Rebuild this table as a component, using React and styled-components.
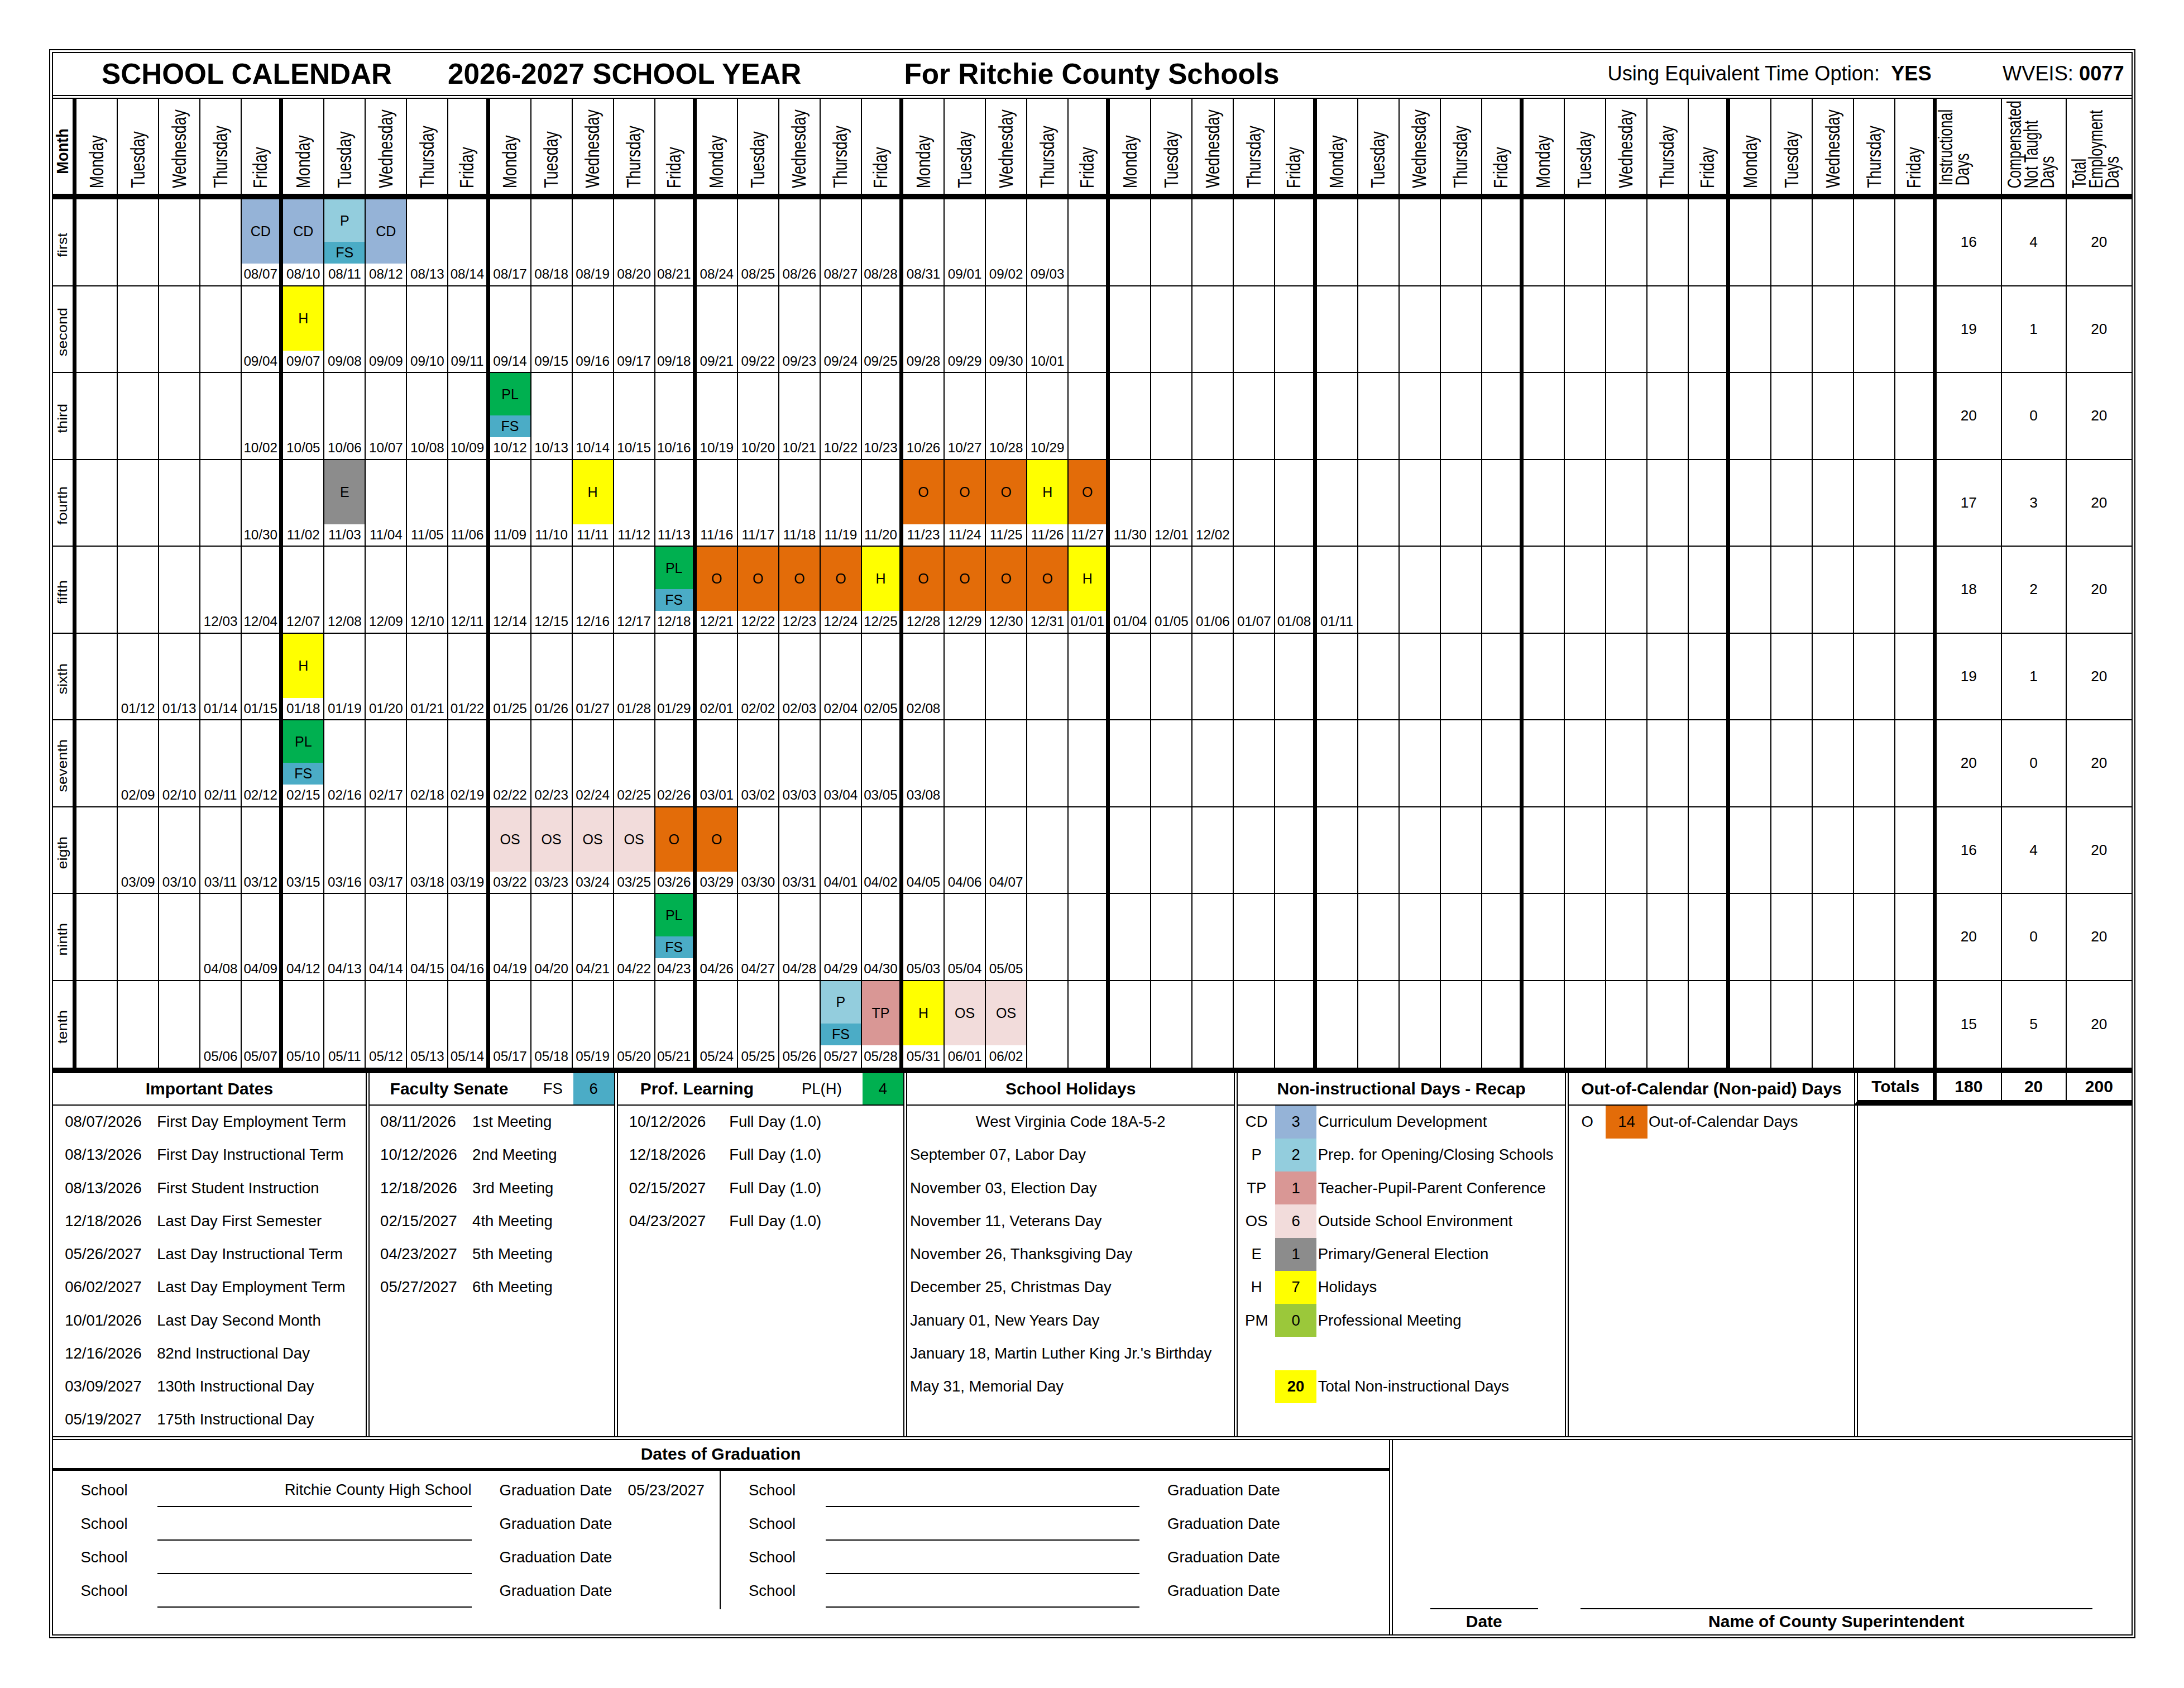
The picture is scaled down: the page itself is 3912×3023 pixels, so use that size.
import React from 'react';
import styled, { createGlobalStyle } from 'styled-components';

const GlobalStyle = createGlobalStyle`
  html, body { margin: 0; padding: 0; background: #fff; }
  body { font-family: "Liberation Sans", Arial, Helvetica, sans-serif; color: #000; }
  * { box-sizing: border-box; }
`;

// month col + 45 day cols + 3 totals cols, shared by calendar and bottom sections
const COLS = '17px repeat(45, minmax(0, 1fr)) repeat(3, 46.5px)';

const COLORS = {
  CD: '#95b3d7',
  P: '#93cddd',
  FS: '#4bacc6',
  H: '#ffff00',
  PL: '#00b050',
  E: '#8c8c8c',
  O: '#e36c09',
  OS: '#f2dcdb',
  TP: '#d99795',
  PM: '#9bc83a',
};

const DAYS = ['Monday', 'Tuesday', 'Wednesday', 'Thursday', 'Friday'];

const MONTHS = [
  { name: 'first', start: 4, dates: '08/07 08/10 08/11 08/12 08/13 08/14 08/17 08/18 08/19 08/20 08/21 08/24 08/25 08/26 08/27 08/28 08/31 09/01 09/02 09/03', marks: { 4: 'CD', 5: 'CD', 6: 'P/FS', 7: 'CD' }, totals: [16, 4, 20] },
  { name: 'second', start: 4, dates: '09/04 09/07 09/08 09/09 09/10 09/11 09/14 09/15 09/16 09/17 09/18 09/21 09/22 09/23 09/24 09/25 09/28 09/29 09/30 10/01', marks: { 5: 'H' }, totals: [19, 1, 20] },
  { name: 'third', start: 4, dates: '10/02 10/05 10/06 10/07 10/08 10/09 10/12 10/13 10/14 10/15 10/16 10/19 10/20 10/21 10/22 10/23 10/26 10/27 10/28 10/29', marks: { 10: 'PL/FS' }, totals: [20, 0, 20] },
  { name: 'fourth', start: 4, dates: '10/30 11/02 11/03 11/04 11/05 11/06 11/09 11/10 11/11 11/12 11/13 11/16 11/17 11/18 11/19 11/20 11/23 11/24 11/25 11/26 11/27 11/30 12/01 12/02', marks: { 6: 'E', 12: 'H', 20: 'O', 21: 'O', 22: 'O', 23: 'H', 24: 'O' }, totals: [17, 3, 20] },
  { name: 'fifth', start: 3, dates: '12/03 12/04 12/07 12/08 12/09 12/10 12/11 12/14 12/15 12/16 12/17 12/18 12/21 12/22 12/23 12/24 12/25 12/28 12/29 12/30 12/31 01/01 01/04 01/05 01/06 01/07 01/08 01/11', marks: { 14: 'PL/FS', 15: 'O', 16: 'O', 17: 'O', 18: 'O', 19: 'H', 20: 'O', 21: 'O', 22: 'O', 23: 'O', 24: 'H' }, totals: [18, 2, 20] },
  { name: 'sixth', start: 1, dates: '01/12 01/13 01/14 01/15 01/18 01/19 01/20 01/21 01/22 01/25 01/26 01/27 01/28 01/29 02/01 02/02 02/03 02/04 02/05 02/08', marks: { 5: 'H' }, totals: [19, 1, 20] },
  { name: 'seventh', start: 1, dates: '02/09 02/10 02/11 02/12 02/15 02/16 02/17 02/18 02/19 02/22 02/23 02/24 02/25 02/26 03/01 03/02 03/03 03/04 03/05 03/08', marks: { 5: 'PL/FS' }, totals: [20, 0, 20] },
  { name: 'eigth', start: 1, dates: '03/09 03/10 03/11 03/12 03/15 03/16 03/17 03/18 03/19 03/22 03/23 03/24 03/25 03/26 03/29 03/30 03/31 04/01 04/02 04/05 04/06 04/07', marks: { 10: 'OS', 11: 'OS', 12: 'OS', 13: 'OS', 14: 'O', 15: 'O' }, totals: [16, 4, 20] },
  { name: 'ninth', start: 3, dates: '04/08 04/09 04/12 04/13 04/14 04/15 04/16 04/19 04/20 04/21 04/22 04/23 04/26 04/27 04/28 04/29 04/30 05/03 05/04 05/05', marks: { 14: 'PL/FS' }, totals: [20, 0, 20] },
  { name: 'tenth', start: 3, dates: '05/06 05/07 05/10 05/11 05/12 05/13 05/14 05/17 05/18 05/19 05/20 05/21 05/24 05/25 05/26 05/27 05/28 05/31 06/01 06/02', marks: { 18: 'P/FS', 19: 'TP', 20: 'H', 21: 'OS', 22: 'OS' }, totals: [15, 5, 20] },
];

const IMPORTANT = [
  ['08/07/2026', 'First Day Employment Term'],
  ['08/13/2026', 'First Day Instructional Term'],
  ['08/13/2026', 'First Student Instruction'],
  ['12/18/2026', 'Last Day First Semester'],
  ['05/26/2027', 'Last Day Instructional Term'],
  ['06/02/2027', 'Last Day Employment Term'],
  ['10/01/2026', 'Last Day Second Month'],
  ['12/16/2026', '82nd Instructional Day'],
  ['03/09/2027', '130th Instructional Day'],
  ['05/19/2027', '175th Instructional Day'],
];

const SENATE = [
  ['08/11/2026', '1st Meeting'],
  ['10/12/2026', '2nd Meeting'],
  ['12/18/2026', '3rd Meeting'],
  ['02/15/2027', '4th Meeting'],
  ['04/23/2027', '5th Meeting'],
  ['05/27/2027', '6th Meeting'],
];

const LEARNING = ['10/12/2026', '12/18/2026', '02/15/2027', '04/23/2027'];

const HOLIDAYS = [
  'September 07, Labor Day',
  'November 03, Election Day',
  'November 11, Veterans Day',
  'November 26, Thanksgiving Day',
  'December 25, Christmas Day',
  'January 01, New Years Day',
  "January 18, Martin Luther King Jr.'s Birthday",
  'May 31, Memorial Day',
];

const RECAP = [
  ['CD', '3', 'Curriculum Development'],
  ['P', '2', 'Prep. for Opening/Closing Schools'],
  ['TP', '1', 'Teacher-Pupil-Parent Conference'],
  ['OS', '6', 'Outside School Environment'],
  ['E', '1', 'Primary/General Election'],
  ['H', '7', 'Holidays'],
  ['PM', '0', 'Professional Meeting'],
];

const GRAD_LEFT = [
  ['Ritchie County High School', '05/23/2027'],
  ['', ''],
  ['', ''],
  ['', ''],
];

/* ---------- page frame ---------- */

const Page = styled.div`
  zoom: 2.5;
  width: 1564px;
  min-height: 1209px;
  padding: 35px 0 0 35px;
`;

const Frame = styled.div`
  width: 1495px;
  border: 3px double #000;
  display: flex;
  flex-direction: column;
`;

const TitleBar = styled.div`
  height: 33px;
  border-bottom: 3px double #000;
  padding-left: 35px;
  display: grid;
  grid-template-columns: 248px 327px 504px 283px 1fr;
  align-items: center;
  white-space: nowrap;
`;

const Title = styled.span`
  font-size: 20.5px;
  font-weight: 700;
`;

const Info = styled.span`
  font-size: 14.5px;
`;

const Strong = styled.b`
  margin-left: ${p => p.$ml || 0}px;
`;

/* ---------- calendar grid ---------- */

const CalGrid = styled.div`
  display: grid;
  grid-template-columns: ${COLS};
  grid-template-rows: 72px repeat(10, 62.2px);
`;

const Rot = styled.span`
  display: block;
  writing-mode: vertical-rl;
  transform: rotate(180deg) scaleX(${p => p.$sx ?? 1});
  font-size: ${p => p.$fs}px;
  font-weight: ${p => (p.$bold ? 700 : 400)};
  line-height: ${p => p.$lh || 'normal'};
  white-space: nowrap;
`;

const HeadCell = styled.div`
  display: flex;
  align-items: flex-end;
  justify-content: ${p => (p.$pl != null ? 'flex-start' : 'center')};
  padding: 0 0 ${p => p.$pb ?? 4}px ${p => p.$pl ?? 0}px;
  border-right: ${p => p.$rb}px solid #000;
  border-bottom: 4px solid #000;
  min-width: 0;
`;

const RowCell = styled.div`
  min-width: 0;
  border-right: ${p => p.$rb}px solid #000;
  border-bottom: ${p => (p.$last ? 0 : 1)}px solid #000;
`;

const MonthCell = styled(RowCell)`
  display: flex;
  align-items: center;
  justify-content: center;
  padding-top: 4px;
`;

const DayCell = styled(RowCell)`
  display: flex;
  flex-direction: column;
`;

const MarkArea = styled.div`
  height: 46px;
  display: flex;
  flex-direction: column;
`;

const Mark = styled.div`
  height: ${p => p.$h}px;
  background: ${p => p.$bg};
  display: flex;
  align-items: center;
  justify-content: center;
  font-size: 10px;
`;

const DateText = styled.div`
  flex: 1;
  display: flex;
  align-items: center;
  justify-content: center;
  font-size: 9.7px;
  white-space: nowrap;
`;

const NumCell = styled(RowCell)`
  display: flex;
  align-items: center;
  justify-content: center;
  font-size: 10.5px;
`;

/* ---------- bottom sections ---------- */

const Bottom = styled.div`
  display: grid;
  grid-template-columns: ${COLS};
  grid-template-rows: 23px 237px;
  border-top: 4px solid #000;
`;

const Section = styled.div`
  grid-column: ${p => p.$col};
  grid-row: 1 / 3;
  border-left: ${p => (p.$first ? 'none' : '3px double #000')};
  display: flex;
  flex-direction: column;
  min-width: 0;
`;

const SecHead = styled.div`
  height: 23px;
  flex: none;
  border-bottom: 1px solid #000;
  font-size: 12px;
  font-weight: 700;
  white-space: nowrap;
  display: ${p => (p.$grid ? 'grid' : 'flex')};
  grid-template-columns: ${p => p.$grid || 'none'};
  align-items: center;
  justify-content: ${p => (p.$grid ? 'stretch' : 'center')};
`;

const HeadTitle = styled.span`
  padding-left: ${p => p.$pl}px;
`;

const HeadCode = styled.span`
  font-weight: 400;
  font-size: 11px;
  text-align: center;
`;

const HeadCount = styled.span`
  align-self: stretch;
  display: flex;
  align-items: center;
  justify-content: center;
  font-weight: 400;
  font-size: 11px;
  background: ${p => p.$bg};
`;

const SecBody = styled.div`
  flex: 1;
  display: flex;
  flex-direction: column;
`;

const ListRow = styled.div`
  height: 23.7px;
  flex: none;
  display: grid;
  grid-template-columns: ${p => p.$dw}px 1fr;
  align-items: center;
  padding-left: ${p => p.$pl}px;
  font-size: 11px;
  white-space: nowrap;
`;

const TextRow = styled.div`
  height: 23.7px;
  flex: none;
  display: flex;
  align-items: center;
  justify-content: ${p => (p.$center ? 'center' : 'flex-start')};
  padding-left: ${p => (p.$center ? 0 : 2)}px;
  font-size: 11px;
  white-space: nowrap;
`;

const KeyRow = styled.div`
  height: 23.7px;
  flex: none;
  display: grid;
  grid-template-columns: ${p => p.$cols};
  align-items: stretch;
  font-size: 11px;
  white-space: nowrap;
`;

const KeyCode = styled.span`
  display: flex;
  align-items: center;
  justify-content: center;
`;

const KeyCount = styled.span`
  display: flex;
  align-items: center;
  justify-content: center;
  background: ${p => p.$bg || 'transparent'};
  font-weight: ${p => (p.$bold ? 700 : 400)};
`;

const KeyText = styled.span`
  display: flex;
  align-items: center;
  padding-left: 1px;
`;

const TotalsHead = styled.div`
  grid-column: ${p => p.$col};
  grid-row: 1;
  border-left: ${p => (p.$dl ? '3px double #000' : 'none')};
  border-right: ${p => p.$rb}px solid #000;
  border-bottom: 4px solid #000;
  display: flex;
  align-items: center;
  justify-content: center;
  font-size: 12px;
  font-weight: 700;
`;

const TotalsBody = styled.div`
  grid-column: 45 / 50;
  grid-row: 2;
  border-left: 3px double #000;
`;

/* ---------- graduation + signature ---------- */

const Grad = styled.div`
  display: flex;
  height: 142px;
  border-top: 3px double #000;
`;

const GradLeft = styled.div`
  width: 960px;
  border-right: 3px double #000;
  display: flex;
  flex-direction: column;
`;

const GradHead = styled.div`
  height: 22px;
  border-bottom: 2px solid #000;
  display: flex;
  align-items: center;
  justify-content: center;
  font-size: 12px;
  font-weight: 700;
`;

const GradBody = styled.div`
  display: flex;
  align-items: flex-start;
`;

const GradHalf = styled.div`
  width: 50%;
  height: 99px;
  padding-top: 2px;
  border-right: ${p => (p.$divider ? '1px solid #000' : 'none')};
`;

const GradLine = styled.div`
  height: 24px;
  display: grid;
  grid-template-columns: 55px 225px 20px 92px 1fr;
  align-items: center;
  padding-left: 20px;
  font-size: 11px;
  white-space: nowrap;
`;

const Field = styled.span`
  align-self: stretch;
  display: flex;
  align-items: center;
  justify-content: flex-end;
  border-bottom: 1px solid #000;
`;

const GradRight = styled.div`
  flex: 1;
  display: flex;
  flex-direction: column;
  justify-content: flex-end;
  padding: 0 28px 0 27px;
`;

const SignRow = styled.div`
  display: flex;
  justify-content: space-between;
`;

const Sign = styled.div`
  width: ${p => p.$w}px;
  height: 19px;
  border-top: 1px solid #000;
  display: flex;
  align-items: center;
  justify-content: center;
  font-size: 12px;
  font-weight: 700;
`;

const weekBorder = d => (d % 5 === 4 ? 3 : 1);

const MonthRow = ({ m, last }) => {
  const dates = m.dates.split(' ');
  return (
    <>
      <MonthCell $rb={3} $last={last}>
        <Rot $fs={10.8} $sx={0.9}>{m.name}</Rot>
      </MonthCell>
      {Array.from({ length: 45 }).map((_, d) => {
        const idx = d - m.start;
        const date = idx >= 0 && idx < dates.length ? dates[idx] : '';
        const codes = m.marks[d] ? m.marks[d].split('/') : [];
        return (
          <DayCell key={d} $rb={weekBorder(d)} $last={last}>
            <MarkArea>
              {codes.map((c, k) => (
                <Mark key={c} $bg={COLORS[c]} $h={codes.length > 1 ? (k === 0 ? 30.5 : 15.5) : 46}>
                  {c}
                </Mark>
              ))}
            </MarkArea>
            <DateText>{date}</DateText>
          </DayCell>
        );
      })}
      {m.totals.map((t, r) => (
        <NumCell key={r} $rb={r < 2 ? 1 : 0} $last={last}>{t}</NumCell>
      ))}
    </>
  );
};

const GradColumn = ({ rows, divider }) => (
  <GradHalf $divider={divider}>
    {rows.map(([school, date], i) => (
      <GradLine key={i}>
        <span>School</span>
        <Field>{school}</Field>
        <span />
        <span>Graduation Date</span>
        <span>{date}</span>
      </GradLine>
    ))}
  </GradHalf>
);

export default function App() {
  return (
    <>
      <GlobalStyle />
      <Page>
        <Frame>
          <TitleBar>
            <Title>SCHOOL CALENDAR</Title>
            <Title>2026-2027 SCHOOL YEAR</Title>
            <Title>For Ritchie County Schools</Title>
            <Info>Using Equivalent Time Option: <Strong $ml={4}>YES</Strong></Info>
            <Info>WVEIS: <Strong>0077</Strong></Info>
          </TitleBar>

          <CalGrid>
            <HeadCell $rb={3} $pb={14}>
              <Rot $fs={10.9} $bold $sx={1.06}>Month</Rot>
            </HeadCell>
            {Array.from({ length: 45 }).map((_, d) => (
              <HeadCell key={d} $rb={weekBorder(d)}>
                <Rot $fs={10.7} $sx={1.3}>{DAYS[d % 5]}</Rot>
              </HeadCell>
            ))}
            <HeadCell $rb={1} $pl={4} $pb={6}>
              <Rot $fs={10.1} $sx={1.38} $lh="8.6px">Instructional<br />Days</Rot>
            </HeadCell>
            <HeadCell $rb={1} $pl={8} $pb={4}>
              <Rot $fs={10.1} $sx={1.38} $lh="8.6px">Compensated<br />Not Taught<br />Days</Rot>
            </HeadCell>
            <HeadCell $rb={0} $pl={8} $pb={4}>
              <Rot $fs={10.1} $sx={1.38} $lh="8.6px">Total<br />Employment<br />Days</Rot>
            </HeadCell>
            {MONTHS.map((m, i) => (
              <MonthRow key={m.name} m={m} last={i === MONTHS.length - 1} />
            ))}
          </CalGrid>

          <Bottom>
            <Section $col="1 / 9" $first>
              <SecHead>Important Dates</SecHead>
              <SecBody>
                {IMPORTANT.map(([d, t]) => (
                  <ListRow key={d + t} $pl={8.7} $dw={66}>
                    <span>{d}</span>
                    <span>{t}</span>
                  </ListRow>
                ))}
              </SecBody>
            </Section>

            <Section $col="9 / 15">
              <SecHead $grid="4fr 1fr 1fr">
                <HeadTitle $pl={14.5}>Faculty Senate</HeadTitle>
                <HeadCode>FS</HeadCode>
                <HeadCount $bg={COLORS.FS}>6</HeadCount>
              </SecHead>
              <SecBody>
                {SENATE.map(([d, t]) => (
                  <ListRow key={d} $pl={7.5} $dw={66}>
                    <span>{d}</span>
                    <span>{t}</span>
                  </ListRow>
                ))}
              </SecBody>
            </Section>

            <Section $col="15 / 22">
              <SecHead $grid="4fr 2fr 1fr">
                <HeadTitle $pl={16}>Prof. Learning</HeadTitle>
                <HeadCode>PL(H)</HeadCode>
                <HeadCount $bg={COLORS.PL}>4</HeadCount>
              </SecHead>
              <SecBody>
                {LEARNING.map(d => (
                  <ListRow key={d} $pl={8} $dw={71.8}>
                    <span>{d}</span>
                    <span>Full Day (1.0)</span>
                  </ListRow>
                ))}
              </SecBody>
            </Section>

            <Section $col="22 / 30">
              <SecHead>School Holidays</SecHead>
              <SecBody>
                <TextRow $center>West Virginia Code 18A-5-2</TextRow>
                {HOLIDAYS.map(h => (
                  <TextRow key={h}>{h}</TextRow>
                ))}
              </SecBody>
            </Section>

            <Section $col="30 / 38">
              <SecHead>Non-instructional Days - Recap</SecHead>
              <SecBody>
                {RECAP.map(([c, n, t]) => (
                  <KeyRow key={c} $cols="0.9fr 1fr 6fr">
                    <KeyCode>{c}</KeyCode>
                    <KeyCount $bg={COLORS[c]}>{n}</KeyCount>
                    <KeyText>{t}</KeyText>
                  </KeyRow>
                ))}
                <KeyRow $cols="0.9fr 1fr 6fr" />
                <KeyRow $cols="0.9fr 1fr 6fr">
                  <KeyCode />
                  <KeyCount $bg={COLORS.H} $bold>20</KeyCount>
                  <KeyText>Total Non-instructional Days</KeyText>
                </KeyRow>
              </SecBody>
            </Section>

            <Section $col="38 / 45">
              <SecHead>Out-of-Calendar (Non-paid) Days</SecHead>
              <SecBody>
                <KeyRow $cols="0.9fr 1fr 5fr">
                  <KeyCode>O</KeyCode>
                  <KeyCount $bg={COLORS.O}>14</KeyCount>
                  <KeyText>Out-of-Calendar Days</KeyText>
                </KeyRow>
              </SecBody>
            </Section>

            <TotalsHead $col="45 / 47" $dl $rb={3}>Totals</TotalsHead>
            <TotalsHead $col="47" $rb={1}>180</TotalsHead>
            <TotalsHead $col="48" $rb={1}>20</TotalsHead>
            <TotalsHead $col="49" $rb={0}>200</TotalsHead>
            <TotalsBody />
          </Bottom>

          <Grad>
            <GradLeft>
              <GradHead>Dates of Graduation</GradHead>
              <GradBody>
                <GradColumn rows={GRAD_LEFT} divider />
                <GradColumn rows={[['', ''], ['', ''], ['', ''], ['', '']]} />
              </GradBody>
            </GradLeft>
            <GradRight>
              <SignRow>
                <Sign $w={77}>Date</Sign>
                <Sign $w={367}>Name of County Superintendent</Sign>
              </SignRow>
            </GradRight>
          </Grad>
        </Frame>
      </Page>
    </>
  );
}
